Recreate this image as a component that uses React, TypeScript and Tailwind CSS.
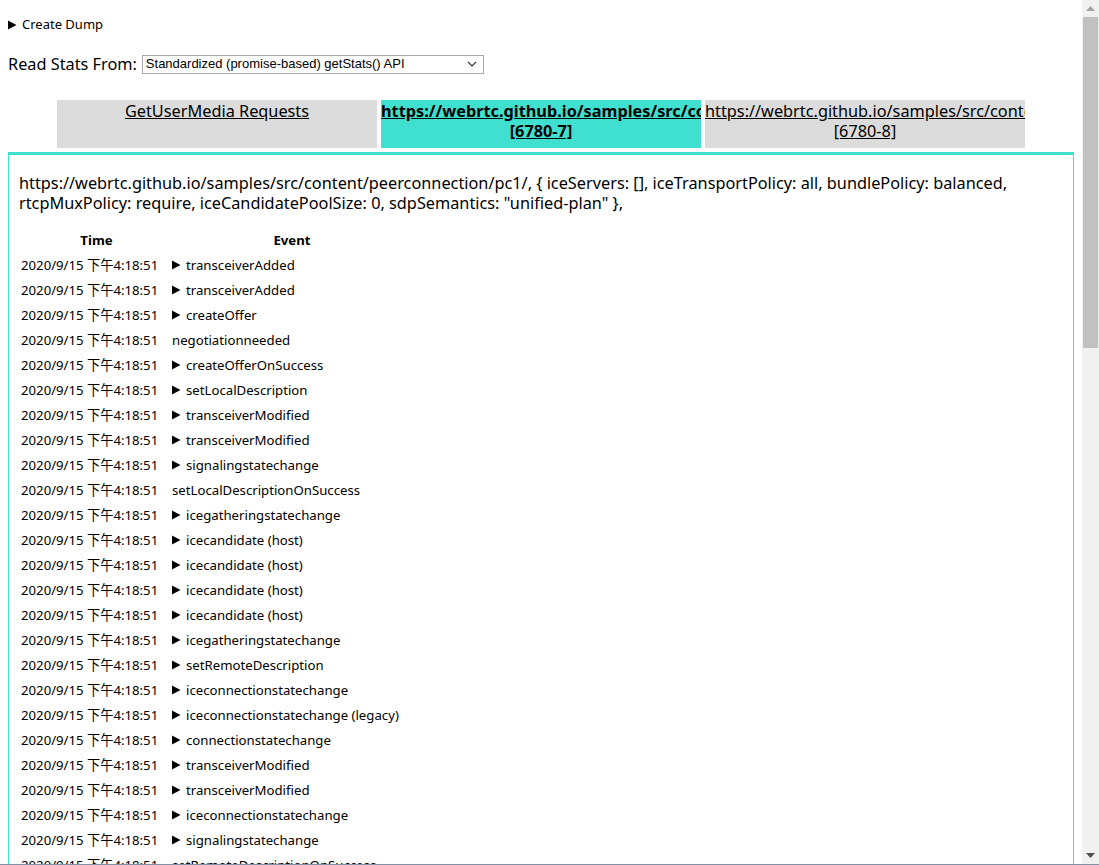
import React from "react";

const events: [string, boolean][] = [
  ["transceiverAdded", true],
  ["transceiverAdded", true],
  ["createOffer", true],
  ["negotiationneeded", false],
  ["createOfferOnSuccess", true],
  ["setLocalDescription", true],
  ["transceiverModified", true],
  ["transceiverModified", true],
  ["signalingstatechange", true],
  ["setLocalDescriptionOnSuccess", false],
  ["icegatheringstatechange", true],
  ["icecandidate (host)", true],
  ["icecandidate (host)", true],
  ["icecandidate (host)", true],
  ["icecandidate (host)", true],
  ["icegatheringstatechange", true],
  ["setRemoteDescription", true],
  ["iceconnectionstatechange", true],
  ["iceconnectionstatechange (legacy)", true],
  ["connectionstatechange", true],
  ["transceiverModified", true],
  ["transceiverModified", true],
  ["iceconnectionstatechange", true],
  ["signalingstatechange", true],
  ["setRemoteDescriptionOnSuccess", false],
];

const Tri = () => (
  <svg width="9" height="10" viewBox="0 0 9 10" className="mr-[5px] inline-block">
    <path d="M0 0.5 L8.5 5 L0 9.5 Z" fill="#000" />
  </svg>
);

const FONT = "font-['Noto_Sans','Noto_Sans_CJK_SC',sans-serif]";

export default function App() {
  return (
    <div className={`flex h-[865px] w-[1099px] flex-col overflow-hidden bg-white text-black ${FONT}`}>
      <div className="flex h-[864px] min-h-0">
        <div className="min-w-0 flex-1 overflow-hidden px-2 pt-[16px]">
          <div className="flex h-[18px] items-center text-[13px]">
            <Tri />
            <span>Create Dump</span>
          </div>
          <div className="mt-[20px] flex h-[20px] items-center">
            <span className="text-[16.3px]">Read Stats From:</span>
            <div className="ml-[5px] flex h-[19px] w-[342px] items-center justify-between border border-[#a9a9a9] bg-white pl-[3px] pr-[6px] font-['Liberation_Sans',sans-serif] text-[13px]">
              <span>Standardized (promise-based) getStats() API</span>
              <svg width="10" height="6" viewBox="0 0 10 6">
                <path d="M1 1 L5 5 L9 1" fill="none" stroke="#333" strokeWidth="1.2" />
              </svg>
            </div>
          </div>
          <div className="mt-[26px] flex h-[48px] justify-center gap-[4px] text-[16.3px] leading-[20px]">
            <div className="w-[320px] overflow-hidden bg-[#dcdcdc] pt-px text-center underline">
              GetUserMedia Requests
            </div>
            <div className="w-[320px] overflow-hidden bg-[#40e0d0] pt-px text-center font-bold underline">
              <div className="whitespace-nowrap text-left">https://webrtc.github.io/samples/src/content/peerconnection/pc1/</div>
              <div>[6780-7]</div>
            </div>
            <div className="w-[320px] overflow-hidden bg-[#dcdcdc] pt-px text-center underline">
              <div className="whitespace-nowrap text-left">https://webrtc.github.io/samples/src/content/peerconnection/pc1/</div>
              <div>[6780-8]</div>
            </div>
          </div>
          <div className="mt-[4px] h-[800px] border-x border-t-[3px] border-[#40e0d0] px-[10px] pt-[18px]">
            <div className="text-[16.3px] leading-[20px]">
              https://webrtc.github.io/samples/src/content/peerconnection/pc1/, {"{"} iceServers: [], iceTransportPolicy: all, bundlePolicy: balanced, rtcpMuxPolicy: require, iceCandidatePoolSize: 0, sdpSemantics: "unified-plan" {"}"},
            </div>
            <div className="mt-[15px] text-[13.2px]">
              <div className="flex h-[25px] items-center font-bold">
                <div className="w-[153px] pl-[2px] text-center">Time</div>
                <div className="w-[240px] text-center">Event</div>
              </div>
              {events.map(([name, arrow], i) => (
                <div key={i} className="flex h-[25px] items-center">
                  <div className="w-[153px] whitespace-nowrap pl-[2px]">2020/9/15 下午4:18:51</div>
                  <div className="flex items-center whitespace-nowrap">
                    {arrow && <Tri />}
                    <span>{name}</span>
                  </div>
                </div>
              ))}
            </div>
          </div>
        </div>
        <div className="flex w-[17px] shrink-0 flex-col bg-[#f1f1f1]">
          <div className="flex h-[17px] items-center justify-center">
            <svg width="9" height="5" viewBox="0 0 9 5">
              <path d="M0 5 L4.5 0 L9 5 Z" fill="#a3a3a3" />
            </svg>
          </div>
          <div className="mx-px h-[331px] bg-[#c1c1c1]" />
          <div className="flex-1" />
          <div className="flex h-[17px] items-center justify-center">
            <svg width="9" height="5" viewBox="0 0 9 5">
              <path d="M0 0 L9 0 L4.5 5 Z" fill="#505050" />
            </svg>
          </div>
        </div>
      </div>
      <div className="h-px bg-[#8391a7]" />
    </div>
  );
}
